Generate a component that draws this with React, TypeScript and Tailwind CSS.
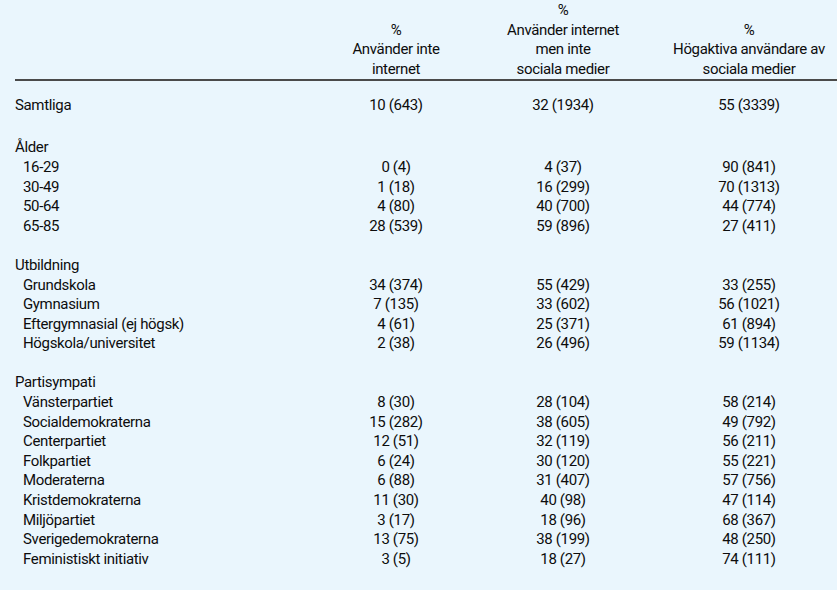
type Row = { label: string; values: [string, string, string] };

type Group = { title: string; rows: Row[] };

const total: Row = {
  label: "Samtliga",
  values: ["10 (643)", "32 (1934)", "55 (3339)"],
};

const groups: Group[] = [
  {
    title: "Ålder",
    rows: [
      { label: "16-29", values: ["0 (4)", "4 (37)", "90 (841)"] },
      { label: "30-49", values: ["1 (18)", "16 (299)", "70 (1313)"] },
      { label: "50-64", values: ["4 (80)", "40 (700)", "44 (774)"] },
      { label: "65-85", values: ["28 (539)", "59 (896)", "27 (411)"] },
    ],
  },
  {
    title: "Utbildning",
    rows: [
      { label: "Grundskola", values: ["34 (374)", "55 (429)", "33 (255)"] },
      { label: "Gymnasium", values: ["7 (135)", "33 (602)", "56 (1021)"] },
      { label: "Eftergymnasial (ej högsk)", values: ["4 (61)", "25 (371)", "61 (894)"] },
      { label: "Högskola/universitet", values: ["2 (38)", "26 (496)", "59 (1134)"] },
    ],
  },
  {
    title: "Partisympati",
    rows: [
      { label: "Vänsterpartiet", values: ["8 (30)", "28 (104)", "58 (214)"] },
      { label: "Socialdemokraterna", values: ["15 (282)", "38 (605)", "49 (792)"] },
      { label: "Centerpartiet", values: ["12 (51)", "32 (119)", "56 (211)"] },
      { label: "Folkpartiet", values: ["6 (24)", "30 (120)", "55 (221)"] },
      { label: "Moderaterna", values: ["6 (88)", "31 (407)", "57 (756)"] },
      { label: "Kristdemokraterna", values: ["11 (30)", "40 (98)", "47 (114)"] },
      { label: "Miljöpartiet", values: ["3 (17)", "18 (96)", "68 (367)"] },
      { label: "Sverigedemokraterna", values: ["13 (75)", "38 (199)", "48 (250)"] },
      { label: "Feministiskt initiativ", values: ["3 (5)", "18 (27)", "74 (111)"] },
    ],
  },
];

const cols = "grid grid-cols-[316px_130px_204px_168px]";

function DataRow({ row, indent }: { row: Row; indent?: boolean }) {
  return (
    <div className={cols}>
      <div className={indent ? "pl-2" : ""}>{row.label}</div>
      {row.values.map((v, i) => (
        <div key={i} className="text-center">
          {v}
        </div>
      ))}
    </div>
  );
}

export default function App() {
  return (
    <div className="h-[590px] w-[837px] overflow-hidden bg-[#eaf6fd] pt-px font-['Roboto',Arial,sans-serif] text-[15px] leading-[19.6px] tracking-[-0.35px] text-[#0d0d0d]">
      <div className="pl-[15px]">
        <div className={cols}>
          <div />
          <div className="pt-[19.6px] text-center">
            <div>%</div>
            <div>Använder inte</div>
            <div>internet</div>
          </div>
          <div className="text-center">
            <div>%</div>
            <div>Använder internet</div>
            <div>men inte</div>
            <div>sociala medier</div>
          </div>
          <div className="pt-[19.6px] text-center">
            <div>%</div>
            <div>Högaktiva användare av</div>
            <div>sociala medier</div>
          </div>
        </div>
        <div className="h-[2px] bg-[#4a4a4a]" />

        <div className="mt-[15px] mb-[22.4px]">
          <DataRow row={total} />
        </div>

        <div className="flex flex-col gap-[19.6px]">
          {groups.map((g) => (
            <section key={g.title}>
              <div>{g.title}</div>
              {g.rows.map((r) => (
                <DataRow key={r.label} row={r} indent />
              ))}
            </section>
          ))}
        </div>
      </div>
    </div>
  );
}
